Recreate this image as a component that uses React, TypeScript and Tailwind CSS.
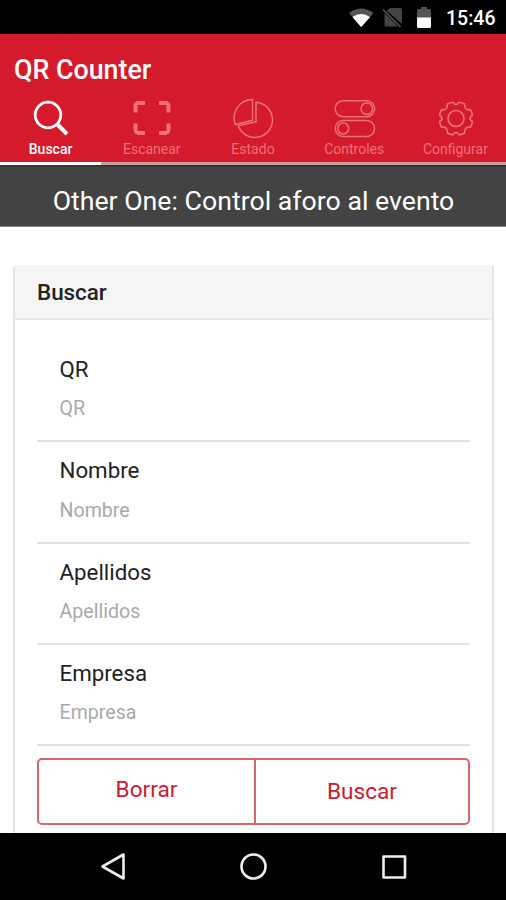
import { useState, ReactNode } from "react";

const SearchIcon = () => (
  <svg className="w-[50px] h-[42px]" viewBox="26 97 50 42" fill="none" stroke="currentColor">
    <circle cx="48" cy="115" r="12.8" strokeWidth="2.8" />
    <path d="M57 124l10 10" strokeWidth="4" />
  </svg>
);

const ScanIcon = () => (
  <svg className="w-[50px] h-[42px]" viewBox="127.5 97 50 42" fill="none" stroke="currentColor" strokeWidth="4">
    <path d="M136 112.5V106a3 3 0 0 1 3-3h6.500M159.500 103h6.500a3 3 0 0 1 3 3v6.500M169 123.500v6.500a3 3 0 0 1-3 3h-6.500M145.500 133H139a3 3 0 0 1-3-3v-6.500" />
  </svg>
);

const PieIcon = () => (
  <svg className="w-[50px] h-[42px]" viewBox="228 97 50 42" fill="none" stroke="currentColor" strokeWidth="1.5">
    <path d="M252.500 99.600A18.500 18.500 0 0 0 235.300 124.600L252.500 120.300Z" />
    <path d="M256 102.300A17.600 17.600 0 1 1 238.300 125.800L256 121.800Z" />
  </svg>
);

const TogglesIcon = () => (
  <svg className="w-[50px] h-[42px]" viewBox="329 97 50 42" fill="none" stroke="currentColor" strokeWidth="1.5">
    <rect x="335.200" y="100.700" width="39.400" height="16" rx="8" />
    <circle cx="366.800" cy="108.700" r="5.800" />
    <rect x="335.200" y="120.500" width="39.400" height="16" rx="8" />
    <circle cx="343.200" cy="128.500" r="5.500" />
  </svg>
);

const GearIcon = () => (
  <svg className="w-[50px] h-[42px]" viewBox="-26 -21.500 50 42" fill="none" stroke="currentColor" strokeWidth="1.6" strokeLinejoin="round">
    <circle r="8" />
    <path d="M-3-16.300Q0-11.500 3-16.300Q6.500-16 8.700-14.500Q8-8 14.500-8.700Q16-6.500 16.300-3Q11.500 0 16.300 3Q16 6.500 14.500 8.700Q8 8 8.700 14.500Q6.500 16 3 16.300Q0 11.500-3 16.300Q-6.500 16-8.700 14.500Q-8 8-14.500 8.700Q-16 6.500-16.300 3Q-11.500 0-16.300-3Q-16-6.500-14.500-8.700Q-8-8-8.700-14.500Q-6.500-16-3-16.300Z" />
  </svg>
);

const tabs: { label: string; icon: ReactNode }[] = [
  { label: "Buscar", icon: <SearchIcon /> },
  { label: "Escanear", icon: <ScanIcon /> },
  { label: "Estado", icon: <PieIcon /> },
  { label: "Controles", icon: <TogglesIcon /> },
  { label: "Configurar", icon: <GearIcon /> },
];

const fields = ["QR", "Nombre", "Apellidos", "Empresa"];

function StatusBar() {
  return (
    <div className="flex h-[34px] shrink-0 items-center justify-end bg-black pr-[10px] text-white">
      <svg className="h-[34px] w-[94px]" viewBox="346 0 94 34">
        <path d="M349 13Q361 4 373.500 13L361.200 27.500Z" fill="#555" />
        <path d="M352.500 17Q361 11 370 17L361.200 27Z" fill="#fff" />
        <path d="M390 8h10.500a1.500 1.500 0 0 1 1.500 1.500V24L386.500 10.500ZM384.500 13L398 26.500h-12a1.500 1.500 0 0 1-1.500-1.500Z" fill="#444" />
        <path d="M383 9.500L400.500 27" stroke="#555" strokeWidth="1.700" />
        <path d="M418.500 9h2.500V7h6v2h2.500a1.500 1.500 0 0 1 1.500 1.500V18h-14v-7.500a1.500 1.500 0 0 1 1.500-1.500Z" fill="#555" />
        <path d="M417 17.500h14v9a1.500 1.500 0 0 1-1.500 1.500h-11a1.500 1.500 0 0 1-1.500-1.500Z" fill="#fff" />
      </svg>
      <span className="ml-[6px] mt-[3px] w-[50px] text-[19.500px] font-medium leading-none">15:46</span>
    </div>
  );
}

function NavBar() {
  return (
    <div className="flex h-[67px] shrink-0 items-center justify-center bg-black">
      <svg className="h-[67px] w-[330px]" viewBox="88 833 330 67" fill="none" stroke="#eee" strokeWidth="2.600" strokeLinejoin="round">
        <path d="M123.500 854.500V878.500L102.500 866.500Z" />
        <circle cx="253.500" cy="866.500" r="12" />
        <rect x="383.500" y="856.500" width="21.500" height="21" />
      </svg>
    </div>
  );
}

export default function App() {
  const [activeTab, setActiveTab] = useState(0);
  const [values, setValues] = useState<string[]>(new Array(fields.length).fill(""));

  const handleChange = (value: string, index: number) => {
    const updated = [...values];
    updated[index] = value;
    setValues(updated);
  };

  return (
    <div className="flex h-[900px] w-[506px] flex-col overflow-hidden bg-white font-['Roboto',sans-serif]">
      <StatusBar />

      <header className="flex h-[131px] shrink-0 flex-col bg-[#d51a2c] text-white">
        <h1 className="mt-[18px] pl-[14px] text-[26.800px] font-medium leading-9">QR Counter</h1>
        <nav className="mt-[9px] grid flex-1 grid-cols-5">
          {tabs.map((tab, idx) => (
            <button
              key={tab.label}
              type="button"
              onClick={() => setActiveTab(idx)}
              className={`flex flex-col items-center border-b-[3px] ${
                activeTab === idx ? "border-white font-medium text-white" : "border-[#c9a09e] font-normal text-[#eb7078]"
              }`}
            >
              {tab.icon}
              <span className="mt-[2px] text-[14px] leading-4">{tab.label}</span>
            </button>
          ))}
        </nav>
      </header>

      <div className="flex h-[62px] shrink-0 items-center justify-center border-t-2 border-b border-t-[#303635] border-b-[#888] bg-[#434343] pl-px pt-[9px] text-[26.700px] text-white">
        Other One: Control aforo al evento
      </div>

      <main className="min-h-0 flex-1 overflow-hidden pl-[13px] pr-[12px] pt-[38px]">
        <section className="h-[620px] rounded-t-[4px] border-x-2 border-[#e4e4e4]">
          <h2 className="flex h-[55px] items-center border-b-2 border-[#e8e8e8] bg-[#f5f5f5] pl-[22px] pt-[3px] text-[22.400px] font-medium text-[#222]">
            Buscar
          </h2>
          <form className="px-[22px] pt-[21px]" onSubmit={(e) => e.preventDefault()}>
            {fields.map((field, idx) => (
              <label key={field} className="flex h-[101.300px] flex-col border-b-2 border-[#e2e2e2] pl-[22.500px] pt-[14px]">
                <span className="text-[22.300px] leading-7 text-[#222]">{field}</span>
                <input
                  type="text"
                  value={values[idx]}
                  placeholder={field}
                  onChange={(e) => handleChange(e.target.value, idx)}
                  className="mt-[12px] h-7 text-[19.600px] text-[#222] outline-none placeholder:text-[#aaa]"
                />
              </label>
            ))}
            <div className="mt-[12px] flex h-[67px] rounded-[5px] border-2 border-[#d6666a] text-[22.600px] text-[#cc2030]">
              <button type="button" onClick={() => setValues(fields.map(() => ""))} className="w-[217px] border-r-2 border-[#d6666a] pb-[4px]">
                Borrar
              </button>
              <button type="submit" className="flex-1">
                Buscar
              </button>
            </div>
          </form>
        </section>
      </main>

      <NavBar />
    </div>
  );
}
